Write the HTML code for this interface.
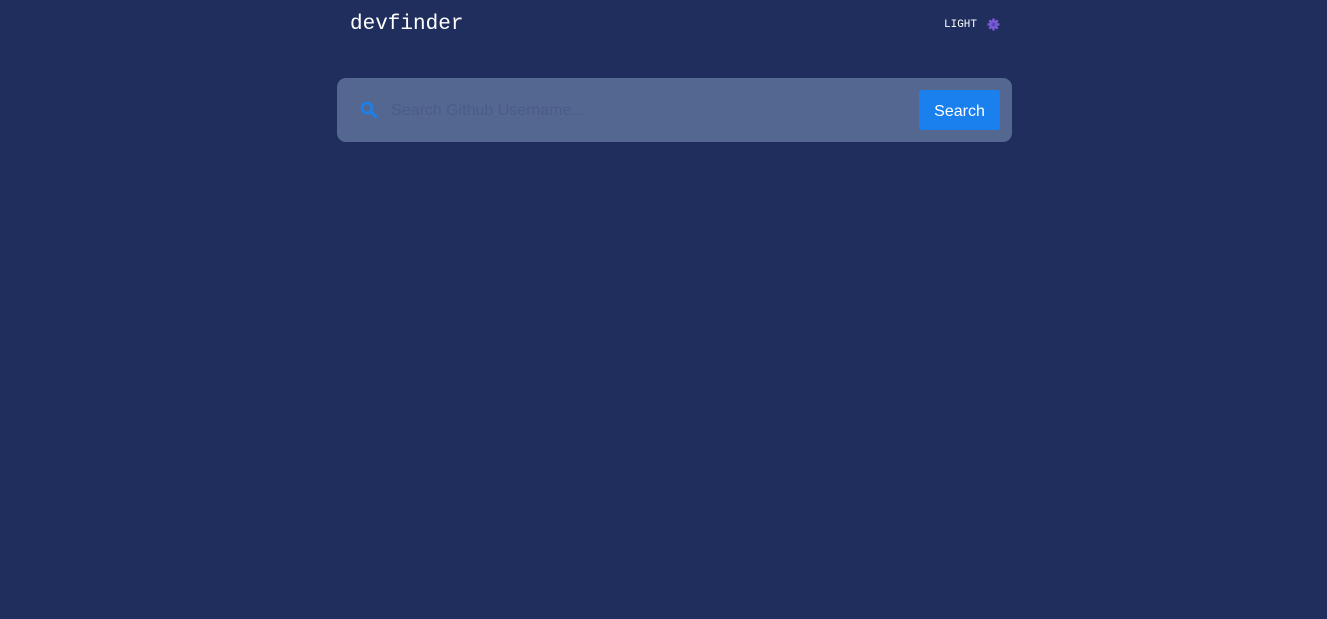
<!DOCTYPE html>
<html><head><style>
body{margin:0;background:#1f2e5c;width:1327px;height:619px;overflow:hidden;font-family:"Liberation Sans",sans-serif}
.logo{position:absolute;left:350px;top:13px;color:#fff;font-family:"Liberation Mono",monospace;font-size:21px}
.mode{position:absolute;left:944px;top:19px;color:#fff;font-family:"Liberation Mono",monospace;font-size:11px}
.sun{position:absolute;left:987px;top:18px;width:13px;height:13px}
.bar{position:absolute;left:337px;top:78px;width:675px;height:64px;background:#546791;border-radius:9px}
.ph{position:absolute;left:391px;top:102px;color:#4a5d88;font-size:16px}
.btn{position:absolute;left:919px;top:90px;width:81px;height:40px;background:#1a80ee;border-radius:3px;color:#fff;font-size:16px;text-align:center;line-height:43px}
</style></head><body>
<div class="logo">devfinder</div>
<div class="mode">LIGHT</div>
<svg class="sun" viewBox="0 0 13 13"><g stroke="#7c5bd6" stroke-width="2.4"><line x1="6.5" y1="0.5" x2="6.5" y2="12.5"/><line x1="0.5" y1="6.5" x2="12.5" y2="6.5"/><line x1="2.3" y1="2.3" x2="10.7" y2="10.7"/><line x1="10.7" y1="2.3" x2="2.3" y2="10.7"/></g><circle cx="6.5" cy="6.5" r="4.2" fill="#7c5bd6"/><circle cx="6.5" cy="6.5" r="2" fill="#5b45b8"/></svg>
<div class="bar"></div>
<svg style="position:absolute;left:360px;top:101px" width="18" height="18" viewBox="0 0 18 18"><circle cx="7" cy="7" r="5" fill="none" stroke="#1a80ee" stroke-width="2.6"/><line x1="10.5" y1="10.5" x2="16" y2="16" stroke="#1a80ee" stroke-width="3" stroke-linecap="round"/></svg>
<div class="ph">Search Github Username...</div>
<div class="btn">Search</div>
</body></html>
